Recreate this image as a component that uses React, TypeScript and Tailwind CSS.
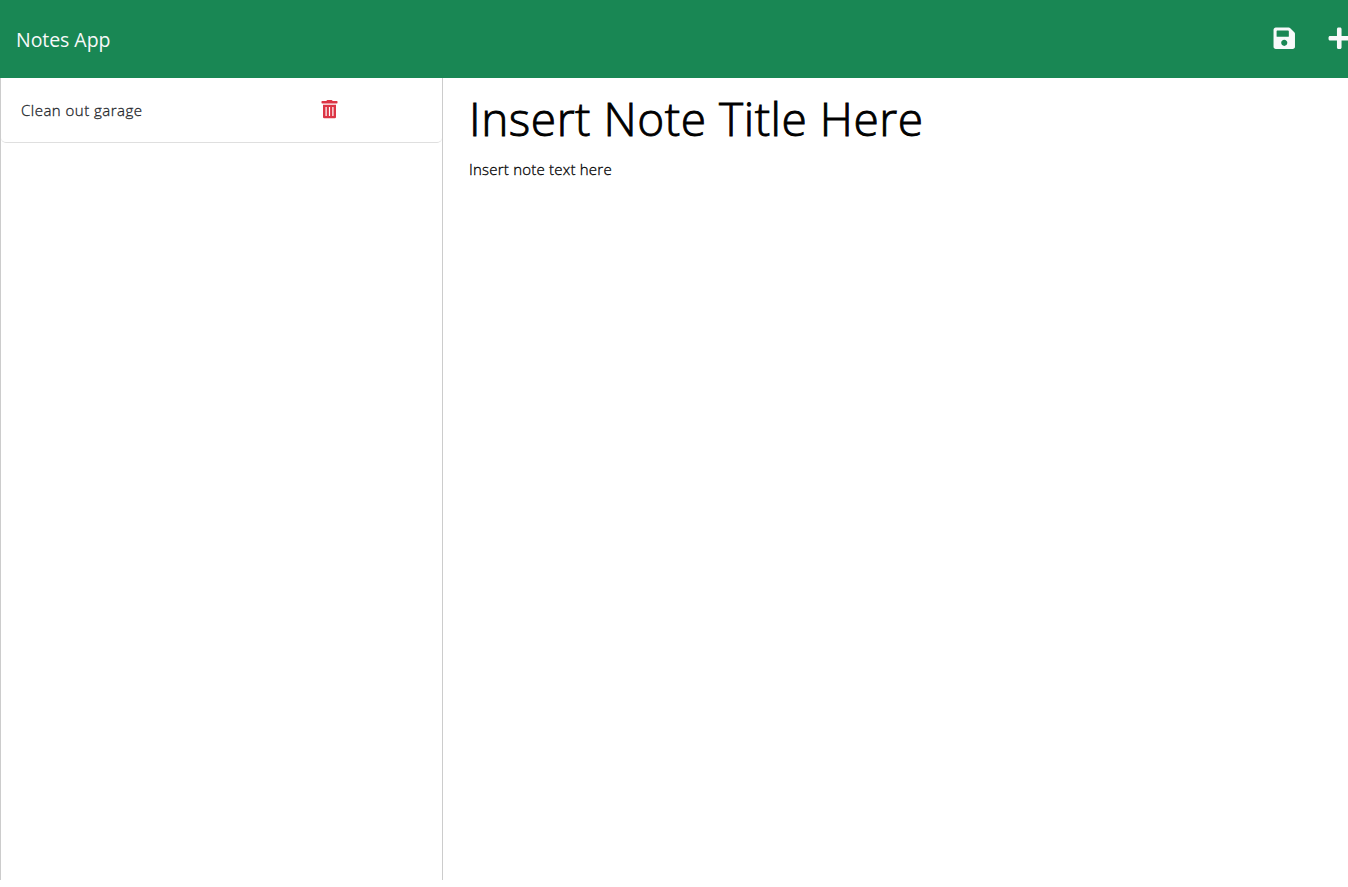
import React from "react";
import { FaSave, FaPlus } from "react-icons/fa";

function TrashIcon() {
  return (
    <svg viewBox="0 0 17 19" className="mb-0.5 h-[19px] w-[17px] fill-[#dc3545]" aria-hidden="true">
      <path d="M5.500 1Q5.500 0 6.500 0h4q1 0 1 1h4.400q.6 0 .6.6v1.200q0 .6-.6.6H1.100q-.6 0-.6-.6V1.600q0-.6.6-.6z" />
      <path fillRule="evenodd" d="M2 4.700h13V17q0 1.200-1.200 1.200H3.200Q2 18.200 2 17zM4.500 7v9h1.200V7zM7.900 7v9h1.200V7zM11.300 7v9h1.200V7z" />
    </svg>
  );
}

export default function App() {
  return (
    <div className="flex h-[887px] w-full flex-col overflow-hidden bg-white font-['Open_Sans','Noto_Sans',sans-serif]">
      <header className="flex h-[78px] shrink-0 items-center justify-between bg-[#198754] pl-4 text-[#f8f9fa]">
        <span className="pt-0.5 text-[19.5px] leading-[30px] tracking-[-0.05px]">Notes App</span>
        <div className="flex w-[76px] shrink-0 gap-[30.5px] pb-0.5">
          <FaSave size={24.500} className="shrink-0" />
          <FaPlus size={24.500} className="shrink-0" />
        </div>
      </header>
      <main className="flex h-[802px]">
        <aside className="w-[443px] border-x border-[#ccc]">
          <div className="flex h-[65px] items-center rounded-[5px] border-b border-[#dfdfdf] pl-5">
            <span className="w-[300px] text-[15px] font-light leading-6 tracking-[0.48px] text-[#212529] [-webkit-text-stroke:0.3px]">Clean out garage</span>
            <TrashIcon />
          </div>
        </aside>
        <section className="pl-[26px] pt-1 text-black">
          <h1 className="text-[46px] font-light leading-[72px] tracking-[0.55px] [-webkit-text-stroke:0.9px]">Insert Note Title Here</h1>
          <p className="pt-[3px] text-[15px] font-light leading-6 tracking-[0.22px] [-webkit-text-stroke:0.3px]">Insert note text here</p>
        </section>
      </main>
    </div>
  );
}
